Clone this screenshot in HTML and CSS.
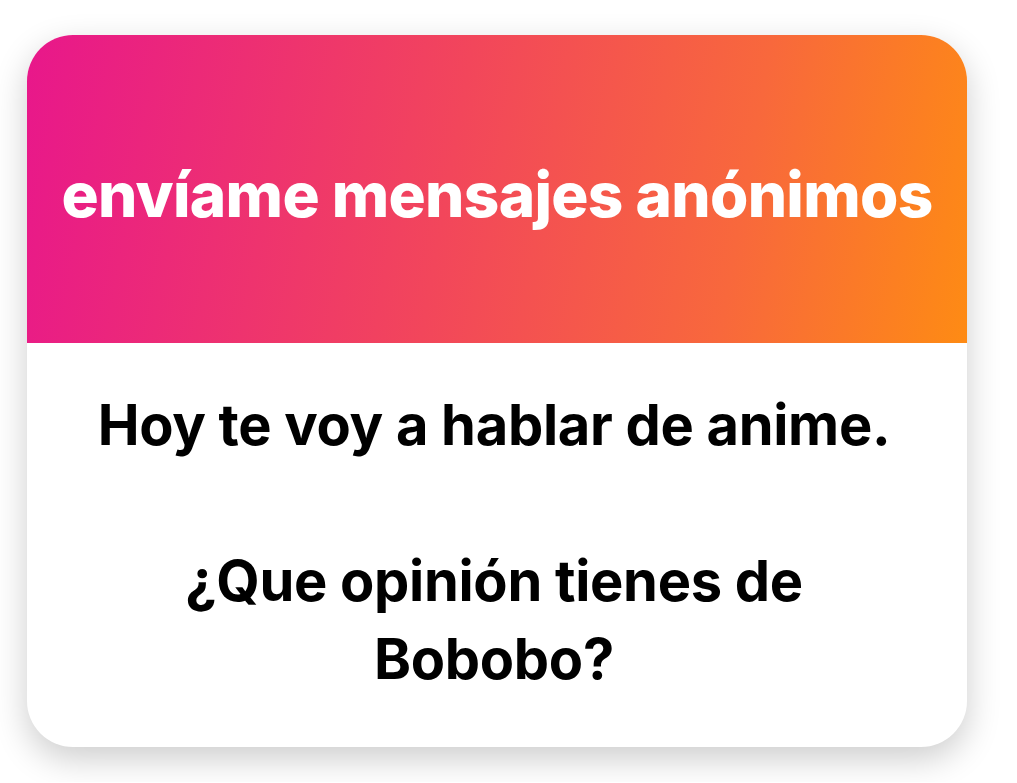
FILE: index.html
```html
<!DOCTYPE html>
<html lang="es">
<head>
    <meta charset="UTF-8">
    <meta name="viewport" content="width=device-width, initial-scale=1.0">
    <title>envíame mensajes anónimos</title>
    <link rel="stylesheet" href="styles.css">
</head>
<body>
    <div class="card">
        <div class="card-header">
            <h1>envíame mensajes anónimos</h1>
        </div>
        <div class="card-body">
            <p>Hoy te voy a hablar de anime.<br><br>¿Que opinión tienes de Bobobo?</p>
        </div>
    </div>
</body>
</html>
```

FILE: styles.css
```css
body {
    margin: 0;
    padding: 35px 50px 35px 27px;
    background-color: #FFFFFF;
    font-family: Inter, "Open Sans", Roboto, sans-serif;
}

.card {
    width: 940px;
    border-radius: 46px;
    overflow: hidden;
    background-color: #FFFFFF;
    box-shadow: 0 12px 34px rgba(0, 0, 0, 0.2);
}

.card-header {
    height: 308px;
    display: flex;
    align-items: center;
    justify-content: center;
    background: linear-gradient(100deg, #e8178b 0%, #f2465b 45%, #f8683c 75%, #fe8b14 100%);
}

.card-header h1 {
    margin: 0;
    padding-top: 10px;
    color: #FFFFFF;
    font-size: 62px;
    font-weight: 800;
    letter-spacing: -0.7px;
    white-space: nowrap;
}

.card-body {
    height: 404px;
    padding: 43px 66px 0 60px;
    box-sizing: border-box;
}

.card-body p {
    margin: 0;
    text-align: center;
    color: #000000;
    font-size: 56px;
    font-weight: 700;
    line-height: 78px;
    letter-spacing: -0.3px;
}
```
